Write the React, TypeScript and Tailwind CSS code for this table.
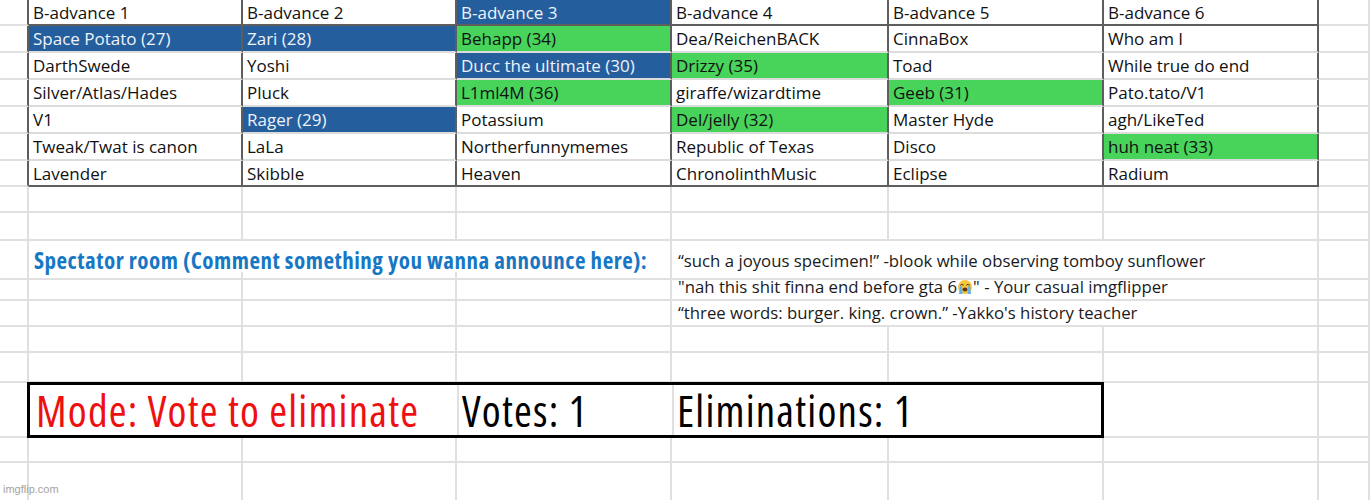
type Fill = 'blue' | 'green' | undefined;

type Cell = { text: string; fill?: Fill };

const COLS = 'grid grid-cols-[29px_214px_214px_215px_217px_215px_215px_1fr]';

const header: Cell[] = [
  { text: 'B-advance 1' },
  { text: 'B-advance 2' },
  { text: 'B-advance 3', fill: 'blue' },
  { text: 'B-advance 4' },
  { text: 'B-advance 5' },
  { text: 'B-advance 6' },
];

const rows: Cell[][] = [
  [
    { text: 'Space Potato (27)', fill: 'blue' },
    { text: 'Zari (28)', fill: 'blue' },
    { text: 'Behapp (34)', fill: 'green' },
    { text: 'Dea/ReichenBACK' },
    { text: 'CinnaBox' },
    { text: 'Who am I' },
  ],
  [
    { text: 'DarthSwede' },
    { text: 'Yoshi' },
    { text: 'Ducc the ultimate (30)', fill: 'blue' },
    { text: 'Drizzy (35)', fill: 'green' },
    { text: 'Toad' },
    { text: 'While true do end' },
  ],
  [
    { text: 'Silver/Atlas/Hades' },
    { text: 'Pluck' },
    { text: 'L1ml4M (36)', fill: 'green' },
    { text: 'giraffe/wizardtime' },
    { text: 'Geeb (31)', fill: 'green' },
    { text: 'Pato.tato/V1' },
  ],
  [
    { text: 'V1' },
    { text: 'Rager (29)', fill: 'blue' },
    { text: 'Potassium' },
    { text: 'Del/jelly (32)', fill: 'green' },
    { text: 'Master Hyde' },
    { text: 'agh/LikeTed' },
  ],
  [
    { text: 'Tweak/Twat is canon' },
    { text: 'LaLa' },
    { text: 'Northerfunnymemes' },
    { text: 'Republic of Texas' },
    { text: 'Disco' },
    { text: 'huh neat (33)', fill: 'green' },
  ],
  [
    { text: 'Lavender' },
    { text: 'Skibble' },
    { text: 'Heaven' },
    { text: 'ChronolinthMusic' },
    { text: 'Eclipse' },
    { text: 'Radium' },
  ],
];

const fillClass = (fill: Fill) => {
  if (fill === 'blue') return 'bg-[#255e9d] text-[#eef3fa]';
  if (fill === 'green') return 'bg-[#48d35b] text-[#111]';
  return 'bg-white text-[#111]';
};

// a plain empty sheet cell
const Blank = ({ span }: { span?: string }) => (
  <div className={`border-r-2 border-b-2 border-[#e0e0e0] ${span ?? ''}`} />
);

const CryingFace = () => (
  <svg width="16" height="16" viewBox="0 0 32 32" className="inline-block align-[-2px]">
    <circle cx="16" cy="16" r="14" fill="#f7c43a" />
    <path d="M7 12 q3 -3 6 0" stroke="#5b3a1a" strokeWidth="2" fill="none" strokeLinecap="round" />
    <path d="M19 12 q3 -3 6 0" stroke="#5b3a1a" strokeWidth="2" fill="none" strokeLinecap="round" />
    <ellipse cx="16" cy="21" rx="5" ry="4" fill="#6b3410" />
    <path d="M6 14 L4 30 L11 30 L10 15 Z" fill="#5fb3e8" />
    <path d="M26 14 L28 30 L21 30 L22 15 Z" fill="#5fb3e8" />
  </svg>
);

const TableRow = ({ cells, height, bottomDark }: { cells: Cell[]; height: string; bottomDark?: boolean }) => (
  <div className={`${COLS} ${height}`}>
    <div className="border-r-2 border-r-[#5e5e5e] border-b-2 border-b-[#e0e0e0]" />
    {cells.map((c, i) => (
      <div
        key={i}
        className={`flex items-center pl-[4px] pt-[1px] whitespace-nowrap overflow-hidden border-r-2 border-r-[#5e5e5e] border-b-2 ${
          bottomDark ? 'border-b-[#5e5e5e]' : 'border-b-[#dcdcdc]'
        } ${fillClass(c.fill)}`}
      >
        {c.text}
      </div>
    ))}
    <Blank />
  </div>
);

const EmptyRow = ({ height }: { height: string }) => (
  <div className={`${COLS} ${height}`}>
    {Array.from({ length: 8 }).map((_, i) => (
      <Blank key={i} />
    ))}
  </div>
);

const QuoteRow = ({ height, children, left }: { height: string; children: React.ReactNode; left?: React.ReactNode }) => (
  <div className={`${COLS} ${height}`}>
    <Blank />
    {left ?? (
      <>
        <Blank />
        <Blank />
        <Blank />
      </>
    )}
    <div className="col-span-3 flex items-center pl-[6px] pt-[2px] whitespace-nowrap border-r-2 border-b-2 border-[#e0e0e0] font-['Open_Sans',sans-serif] text-[16.75px] text-[#1a1a1a]">
      {children}
    </div>
    <Blank />
  </div>
);

export default function App() {
  return (
    <div className="relative w-[1370px] h-[500px] overflow-hidden bg-white font-['Open_Sans',sans-serif] text-[17px]">
      <TableRow cells={header} height="h-[26px]" bottomDark />
      {rows.map((r, i) => (
        <TableRow key={i} cells={r} height={i === rows.length - 1 ? 'h-[26px]' : 'h-[27px]'} bottomDark={i === rows.length - 1} />
      ))}
      <EmptyRow height="h-[26px]" />
      <EmptyRow height="h-[28px]" />
      <QuoteRow
        height="h-[31px]"
        left={
          <div className="col-span-3 flex items-center pl-[5px] pt-[2px] whitespace-nowrap border-r-2 border-b-2 border-[#e0e0e0] font-['Open_Sans',sans-serif] font-stretch-condensed font-bold text-[23px] tracking-[0.5px] text-[#1677c4]">
            Spectator room (Comment something you wanna announce here):
          </div>
        }
      >
        “such a joyous specimen!” -blook while observing tomboy sunflower
      </QuoteRow>
      <QuoteRow height="h-[26px]">
        "nah this shit finna end before gta 6<CryingFace />" - Your casual imgflipper
      </QuoteRow>
      <QuoteRow height="h-[28px]">“three words: burger. king. crown.” -Yakko's history teacher</QuoteRow>
      <EmptyRow height="h-[27px]" />
      <EmptyRow height="h-[30px]" />
      <div className={`${COLS} h-[55px]`}>
        <Blank />
        <div className="col-span-5 -ml-[2px] -mt-[1px] grid grid-cols-[427px_215px_1fr] border-[3px] border-black font-['Open_Sans',sans-serif] font-stretch-condensed text-[43px] tracking-[1.2px] leading-none whitespace-nowrap">
          <div className="flex items-center pl-[6px] text-[#ee1010]">Mode: Vote to eliminate</div>
          <div className="flex items-center pl-[3px] border-l-2 border-[#e0e0e0] text-black">Votes: 1</div>
          <div className="flex items-center pl-[3px] border-l-2 border-[#e0e0e0] text-black">Eliminations: 1</div>
        </div>
        <Blank />
        <Blank />
      </div>
      <EmptyRow height="h-[25px]" />
      <EmptyRow height="h-[40px]" />
      <div className="absolute left-[3px] bottom-[3px] font-['Liberation_Sans',sans-serif] text-[11px] text-[#a3a3a3]">
        imgflip.com
      </div>
    </div>
  );
}
